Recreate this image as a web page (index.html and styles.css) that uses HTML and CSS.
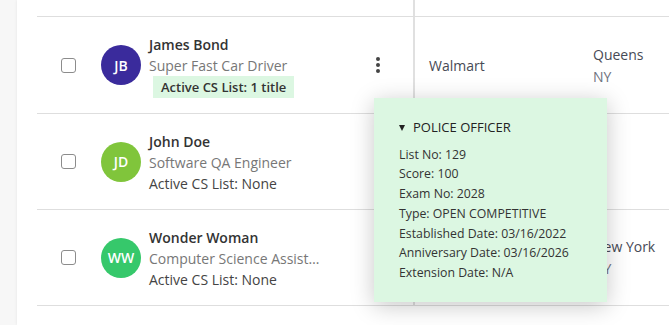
FILE: index.html
```html
<!DOCTYPE html>
<html>
  <head>
    <title>Candidates</title>
    <link rel="stylesheet" href="styles.css">
  </head>
  <body>
    <div class="card">
      <div class="row row--top">
        <div class="cell-select"></div>
        <div class="cell-person"></div>
        <div class="cell-actions"></div>
        <div class="cell-company"></div>
        <div class="cell-city"></div>
      </div>

      <div class="row row--badge">
        <div class="cell-select"><span class="checkbox"></span></div>
        <div class="cell-person">
          <div class="avatar avatar--indigo">JB</div>
          <div class="person-info">
            <div class="person-name">James Bond</div>
            <div class="person-title">Super Fast Car Driver</div>
            <div><span class="cs-badge">Active CS List: 1 title</span></div>
          </div>
        </div>
        <div class="cell-actions">
          <span class="kebab"><i></i><i></i><i></i></span>
        </div>
        <div class="cell-company">Walmart</div>
        <div class="cell-city">
          <div class="city">Queens</div>
          <div class="state">NY</div>
        </div>
      </div>

      <div class="row">
        <div class="cell-select"><span class="checkbox"></span></div>
        <div class="cell-person">
          <div class="avatar avatar--lime">JD</div>
          <div class="person-info">
            <div class="person-name">John Doe</div>
            <div class="person-title">Software QA Engineer</div>
            <div class="cs-none">Active CS List: None</div>
          </div>
        </div>
        <div class="cell-actions"></div>
        <div class="cell-company"></div>
        <div class="cell-city"></div>
      </div>

      <div class="row">
        <div class="cell-select"><span class="checkbox"></span></div>
        <div class="cell-person">
          <div class="avatar avatar--green">WW</div>
          <div class="person-info">
            <div class="person-name">Wonder Woman</div>
            <div class="person-title">Computer Science Assistant</div>
            <div class="cs-none">Active CS List: None</div>
          </div>
        </div>
        <div class="cell-actions"></div>
        <div class="cell-company"></div>
        <div class="cell-city">
          <div class="city">New York</div>
          <div class="state">NY</div>
        </div>
      </div>

      <!-- popover for the active civil service list -->
      <div class="cs-popover">
        <div class="cs-popover-title"><span class="caret"></span>POLICE OFFICER</div>
        <div>List No: 129</div>
        <div>Score: 100</div>
        <div>Exam No: 2028</div>
        <div>Type: OPEN COMPETITIVE</div>
        <div>Established Date: 03/16/2022</div>
        <div>Anniversary Date: 03/16/2026</div>
        <div>Extension Date: N/A</div>
      </div>
    </div>
  </body>
</html>
```

FILE: styles.css
```css
body {
  margin: 0;
  background-color: #f7f7f7;
  font-family: "Open Sans", "Noto Sans", sans-serif;
  font-size: 14px;
  color: #333;
  overflow: hidden;
}

.card {
  position: relative;
  margin-left: 17px;
  height: 325px;
  background-color: #fff;
  box-shadow: 0 0 3px rgba(0, 0, 0, 0.08);
}

.row {
  display: flex;
  align-items: stretch;
  height: 95px;
  margin-left: 20px;
  padding-left: 24px;
  border-bottom: 1px solid #dedede;
}

.row--top {
  height: 16px;
}

.row--badge {
  height: 96px;
}

.cell-select {
  display: flex;
  align-items: center;
  width: 16px;
  margin-right: 24px;
}

.checkbox {
  width: 13px;
  height: 13px;
  border: 1.5px solid #8c8c8c;
  border-radius: 3px;
}

.cell-person {
  display: flex;
  align-items: center;
  gap: 8px;
  width: 265px;
}

.avatar {
  display: flex;
  align-items: center;
  justify-content: center;
  flex-shrink: 0;
  width: 40px;
  height: 40px;
  border-radius: 50%;
  color: #fff;
  font-size: 14px;
  font-weight: 600;
}

.avatar--indigo {
  background-color: #3a2b9c;
}

.avatar--lime {
  background-color: #80c53b;
}

.avatar--green {
  background-color: #36c86b;
}

.person-info {
  width: 174px;
  line-height: 21px;
}

.person-name {
  font-weight: 600;
  color: #333;
  margin-top: 2px;
}

.person-title {
  color: #777;
  white-space: nowrap;
  overflow: hidden;
  text-overflow: ellipsis;
}

.cs-none {
  color: #444;
}

.cs-badge {
  display: inline-block;
  margin-left: 4px;
  padding: 0 8px;
  line-height: 22px;
  font-size: 13px;
  font-weight: 600;
  color: #333;
  background-color: #dcf7e2;
}

.cell-actions {
  display: flex;
  align-items: center;
  width: 47px;
  padding-left: 10px;
  box-sizing: border-box;
}

.kebab {
  display: flex;
  flex-direction: column;
  gap: 2px;
}

.kebab i {
  width: 4px;
  height: 4px;
  border-radius: 50%;
  background-color: #444;
}

.cell-company {
  display: flex;
  align-items: center;
  width: 180px;
  padding-left: 14px;
  box-sizing: border-box;
  border-left: 2px solid #e0e0e0;
  color: #474a55;
}

.cell-city {
  display: flex;
  flex-direction: column;
  justify-content: center;
  line-height: 21px;
}

.city {
  color: #474a55;
}

.state {
  color: #6f7380;
  margin-top: 1px;
}

.cs-popover {
  position: absolute;
  left: 357px;
  top: 98px;
  width: 233px;
  height: 204px;
  padding: 20px 0 0 25px;
  box-sizing: border-box;
  background-color: #dcf7e2;
  box-shadow: 0 4px 22px rgba(0, 0, 0, 0.22);
  font-size: 12.3px;
  line-height: 19.7px;
  color: #333;
}

.cs-popover-title {
  display: flex;
  align-items: center;
  margin-bottom: 7px;
  font-size: 13px;
  color: #222;
}

.caret {
  width: 0;
  height: 0;
  margin-right: 8px;
  border-left: 3.5px solid transparent;
  border-right: 3.5px solid transparent;
  border-top: 6px solid #222;
}
```
